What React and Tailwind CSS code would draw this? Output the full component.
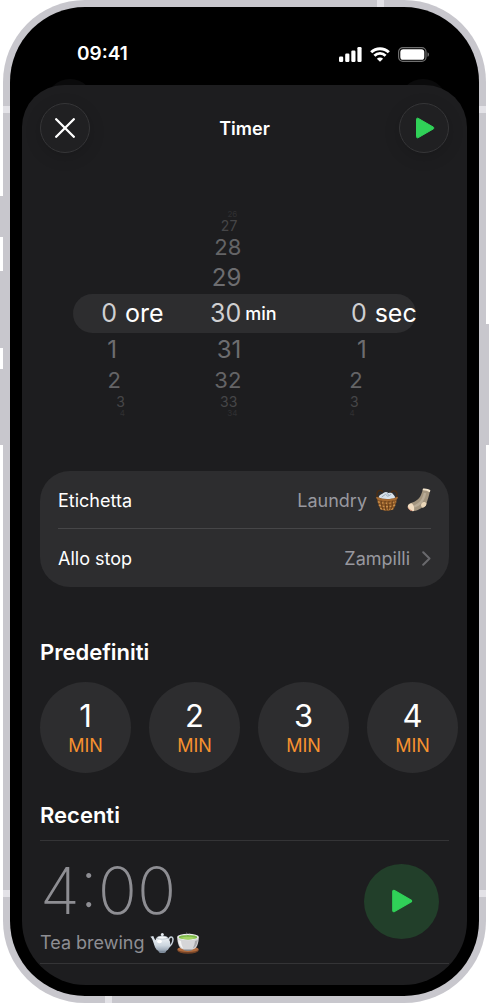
import { useState } from "react";

const STEPS = [
    { row: "h-2 leading-[8px] text-[8px] text-[#303032]" },
    { row: "h-[15px] leading-[15px] text-[14px] text-[#464648]" },
    { row: "h-7 leading-7 text-[22px] text-[#646466]" },
    { row: "h-[33px] leading-[33px] text-[24px] text-[#6d6d70]" },
    { row: "h-[39px] leading-[39px] text-[25px] text-[#cfcfd1]" },
    { row: "h-[33px] leading-[33px] text-[24px] text-[#6d6d70]" },
    { row: "h-7 leading-7 text-[22px] text-[#646466]" },
    { row: "h-[15px] leading-[15px] text-[14px] text-[#464648]" },
    { row: "h-2 leading-[8px] text-[8px] text-[#303032]" },
];

// The outer wheels lean towards the middle one
const WHEELS = [
    {
        name: "ore",
        values: ["", "", "", "", "0", "1", "2", "3", "4"],
        lean: ["pr-0", "pr-1", "pr-2", "pr-2", "pr-2", "pr-2", "pr-1", "pr-0", "pr-0"],
        unit: "-ml-2 pl-2 text-[25px]",
        box: "w-[52px]",
    },
    {
        name: "min",
        values: ["26", "27", "28", "29", "30", "31", "32", "33", "34"],
        lean: ["pr-1", "pr-1", "pr-0", "pr-0", "pr-0", "pr-0", "pr-0", "pr-1", "pr-1"],
        unit: "pl-1 text-[18px] font-medium",
        box: "w-[43px]",
    },
    {
        name: "sec",
        values: ["", "", "", "", "0", "1", "2", "3", "4"],
        lean: ["pr-3", "pr-2", "pr-1", "pr-0", "pr-0", "pr-0", "pr-1", "pr-2", "pr-3"],
        unit: "pl-2 text-[25px]",
        box: "w-[43px]",
    },
];

const PRESETS = [1, 2, 3, 4];

const PlayIcon = ({ className }) => (
    <svg viewBox="0 0 20 22" className={className} aria-hidden="true">
        <path
            d="M1.500 2.200v17.600c0 .9.8 1.300 1.600.9L18.200 12c.9-.5.9-1.500 0-2L3.100 1.300C2.300.900 1.500 1.300 1.500 2.200z"
            fill="#30d158"
            stroke="#30d158"
            strokeWidth="1"
            strokeLinejoin="round"
        />
    </svg>
);

const StatusIcons = () => (
    <div className="flex items-center gap-2">
        <svg viewBox="0 0 23 15" className="h-[15px] w-[23px]" fill="#fff" aria-hidden="true">
            <rect x="0" y="9.500" width="4.200" height="5.500" rx="1.200" />
            <rect x="6.200" y="6.500" width="4.200" height="8.500" rx="1.200" />
            <rect x="12.300" y="3.500" width="4.200" height="11.500" rx="1.200" />
            <rect x="18.400" y="0" width="4.200" height="15" rx="1.200" />
        </svg>
        <svg viewBox="0 0 20 15" className="h-[15px] w-[20px]" fill="none" stroke="#fff" aria-hidden="true">
            <path d="M1.200 5.300a12.600 12.600 0 0 1 17.600 0" strokeWidth="3" />
            <path d="M4.400 8.800a7.900 7.900 0 0 1 11.200 0" strokeWidth="2.800" />
            <path d="M10 14.700l-3.100-3a4.400 4.400 0 0 1 6.200 0z" fill="#fff" stroke="none" />
        </svg>
        <svg viewBox="0 0 32 15" className="h-[15px] w-[32px]" aria-hidden="true">
            <rect x=".6" y=".6" width="27.400" height="13.800" rx="4.300" fill="none" stroke="#6f6f6f" strokeWidth="1.200" />
            <rect x="2.300" y="2.200" width="24" height="10.600" rx="2.900" fill="#fff" />
            <path d="M29.500 5.200c1 .4 1.500 1.300 1.500 2.300s-.5 1.900-1.500 2.300z" fill="#6f6f6f" />
        </svg>
    </div>
);

const BasketIcon = () => (
    <svg viewBox="0 0 24 24" className="h-6 w-6" role="img" aria-label="Cesto">
        <path d="M3 10.500C1.200 6.500 1.500 2.700 5 2.300c1.200-.1 2 .4 2.600 1.200M21 11c1.800-4 1.500-7.800-2-8.200-1.200-.1-2.200.4-2.700 1.500" fill="none" stroke="#4b2d13" strokeWidth="1.300" strokeLinecap="round" />
        <path d="M2 9.800c2-1.500 18-1.500 20 0-.3 3.500-1.500 7-2.700 10-.8 2-3.400 3-7.300 3s-6.500-1-7.300-3c-1.200-3-2.400-6.500-2.700-10z" fill="#8c5725" />
        <path d="M2.800 13.600c5.300 2.300 13.100 2.300 18.400 0M3.900 17c4.800 2.200 11.400 2.200 16.200 0M5.200 20.200c4 1.800 9.600 1.800 13.600 0" fill="none" stroke="#c98f4b" strokeWidth="1.500" strokeDasharray="2.300 1.300" />
        <path d="M6 12l1.500 9M10 12.500l.6 9.500M14 12.500l-.6 9.500M18 12l-1.500 9" stroke="#533014" strokeWidth=".7" />
        <path d="M2 9.800c2 3 18 3 20 0" fill="none" stroke="#a86c32" strokeWidth="1.800" strokeLinecap="round" />
        <path d="M3.500 9.300C4.500 6.500 7 6.300 8.800 4.800c1.600-1.300 3.200-.9 4.600.2 1.800-.6 3.700-.4 4.700 1.200.9.900 1.700 2 2.200 3.200-4 2-12.500 2-16.800-.1z" fill="#d9e2ea" />
        <path d="M7 8.800l3.500-2.500 2.300 2 3.200-1.900M12.200 5.400l1.500 1.700" fill="none" stroke="#93a4b3" strokeWidth=".9" strokeLinecap="round" />
    </svg>
);

const SockIcon = () => (
    <svg viewBox="0 0 24 24" className="h-6 w-6" role="img" aria-label="Calzino">
        <path d="M15.800 1.500c2.300-.6 4.800.2 7 1.700-.5 4.500-2.300 8.500-3.600 13.300-.5 2-2.100 2.500-3.600 3.100-3 1-5.400 3.400-9 3.400-3.600.1-6.400-2.800-5.500-5.700 1-2.500 5.900-2.600 8.500-5 4.100-2.800 5.200-7.100 6.200-10.800z" fill="#a3957f" />
        <path d="M18 5c-.8 4-2.500 8-5.500 10.500-2 1.600-4 2.300-5.500 3.300" fill="none" stroke="#b9ac97" strokeWidth="2.400" />
        <path d="M15.600 2.300l.4-1.800c2.700-.4 5.400.3 7.400 1.800l-.6 2c-2.200-1.400-4.500-2.100-7.200-2z" fill="#f1e3cb" />
        <path d="M4.500 15.300c-2.800.7-4.200 2.300-3.600 4.400.8 2.300 3.400 3.700 6 3.400.8-3.700-.1-6-2.400-7.800z" fill="#f1dcc0" />
        <path d="M19.500 15.700c-.6-1.700-2.800-2.400-4.400-1-1.600 1.500-1.500 3.900.5 5 1.700-.6 3.400-1.300 3.900-4z" fill="#ead6b9" />
        <path d="M1.200 19.500c.5 1.800 2.300 3 4 3.200" fill="none" stroke="#c36b54" strokeWidth=".7" />
    </svg>
);

const TeapotIcon = () => (
    <svg viewBox="0 0 24 22" className="h-[22px] w-6" role="img" aria-label="Teiera">
        <defs>
            <linearGradient id="pot" x1="0" y1="0" x2="0" y2="1">
                <stop offset="0" stopColor="#f8fafc" />
                <stop offset=".6" stopColor="#cbd5de" />
                <stop offset="1" stopColor="#8d9aaa" />
            </linearGradient>
        </defs>
        <path d="M18.500 8c1-3.700 4.600-3.900 4.500-.4-.1 3.200-2.300 6.900-5.200 7.400" fill="none" stroke="#c4ced7" strokeWidth="1.500" />
        <path d="M.3 4.800l3-.8c1 2.700 1.700 4.300 3.500 5.300l-.4 6C2.900 13 3.600 7.300.3 4.800z" fill="#d6dee6" />
        <ellipse cx="12.300" cy="12" rx="8" ry="8" fill="url(#pot)" />
        <path d="M8.300 18.800h8l-.8 1.700c-2 .8-4.500.8-6.400 0z" fill="#7f8c9b" />
        <path d="M6.500 6.300c.7-3 10.800-3 11.600 0-3.300 1.100-8.300 1.100-11.600 0z" fill="#f7f9fb" stroke="#9eabb7" strokeWidth=".6" />
        <circle cx="12.300" cy="2.400" r="1.500" fill="#e4eaf0" />
        <ellipse cx="9.500" cy="9.500" rx="2.400" ry="1.800" fill="#fff" />
    </svg>
);

const TeacupIcon = () => (
    <svg viewBox="0 0 24 22" className="h-[22px] w-6" role="img" aria-label="Tazza di tè">
        <ellipse cx="12" cy="18.300" rx="10.800" ry="3.400" fill="#744326" />
        <ellipse cx="12" cy="17.300" rx="10.700" ry="2.800" fill="#b16b3d" />
        <path d="M7.700 15h8.600v3.200c-2 1.100-6.600 1.100-8.600 0z" fill="#85868a" />
        <path d="M1.200 5.300c.2 5.900 1.800 11.700 6.500 12.200h8.600c4.700-.5 6.300-6.300 6.500-12.200z" fill="#d5d5d7" />
        <path d="M2.200 8c.5 4 2 7 5 8.600-1.300-3-2-5-2.200-7.600z" fill="#f3f3f3" />
        <path d="M21.800 8c-.5 4-2 7-5 8.600 1.300-3 2-5 2.200-7.600z" fill="#a7a7aa" />
        <ellipse cx="12" cy="5" rx="10.900" ry="3.200" fill="#ededee" />
        <ellipse cx="12" cy="5.200" rx="9.300" ry="2.300" fill="#7dba49" />
        <path d="M4.300 6c3.900-1.700 11.500-1.700 15.400 0-4 1.900-11.400 1.900-15.400 0z" fill="#a3d464" />
        <path d="M10.500 4.300c-1.500-1.600 1-2 0-3.800M13.500 4c-1.100-1.300.9-1.500.2-3" fill="none" stroke="#b9c0b7" strokeWidth=".7" opacity=".6" />
    </svg>
);

const Wheel = ({ wheel }) => (
    <div
        className="flex items-center"
        role="spinbutton"
        aria-label={wheel.name}
        aria-valuenow={Number(wheel.values[4])}
        tabIndex={0}>
        <div className={`shrink-0 ${wheel.box}`}>
            {STEPS.map((step, i) => (
                <div key={i} className={`text-right ${step.row} ${wheel.lean[i]}`}>
                    {wheel.values[i]}
                </div>
            ))}
        </div>
        <span className={`text-white ${wheel.unit}`}>{wheel.name}</span>
    </div>
);

const PhoneFrame = ({ children }) => (
    <div className="relative mx-[3px] rounded-[82px] bg-[#c8c7cd] p-[7px]">
        {/* Side buttons */}
        <div className="absolute -left-[3px] top-[196px] h-[41px] w-[3px] bg-[#c8c7cd]" />
        <div className="absolute -left-[3px] top-[271px] h-[77px] w-[3px] bg-[#c8c7cd]" />
        <div className="absolute -left-[3px] top-[369px] h-[76px] w-[3px] bg-[#c8c7cd]" />
        <div className="absolute -right-[3px] top-[324px] h-[121px] w-[3px] bg-[#c8c7cd]" />
        {/* Antenna bands */}
        <div className="absolute left-0 right-0 top-[106px] h-[7px] bg-[#e3e2e7]" />
        <div className="absolute bottom-[106px] left-0 right-0 h-[7px] bg-[#e3e2e7]" />
        <div className="absolute right-[102px] top-0 h-[7px] w-[7px] bg-[#e3e2e7]" />
        <div className="absolute bottom-0 left-[102px] h-[7px] w-[7px] bg-[#e3e2e7]" />
        <div className="relative rounded-[75px] bg-black px-3 pb-[11px]">{children}</div>
    </div>
);

const App = () => {
    const [label, setLabel] = useState("Laundry");

    return (
        <main className="min-h-screen bg-white font-['Inter','Liberation_Sans',sans-serif] text-white">
            <PhoneFrame>
                <header className="relative flex h-[78px] items-center justify-between pl-[55px] pr-[37px] pt-4">
                    <span className="text-[19px] font-semibold leading-6">09:41</span>
                    <StatusIcons />
                    <div className="absolute left-6 top-[72px] h-12 w-12 rounded-full bg-[#0a0a0b]" />
                    <div className="absolute right-5 top-[72px] h-12 w-12 rounded-full bg-[#0a0a0b]" />
                </header>

                <section className="relative overflow-hidden rounded-b-[64px] rounded-t-[42px] bg-[#1d1d1f] px-[18px] pb-[21px] pt-[18px]">
                    <div className="flex items-center justify-between">
                        <button
                            type="button"
                            aria-label="Chiudi"
                            className="flex size-[50px] items-center justify-center rounded-full border border-[#363638] bg-[#202022] shadow-[0_4px_16px_rgba(0,0,0,0.15)]">
                            <svg viewBox="0 0 20 20" className="size-5" aria-hidden="true">
                                <path d="M1.200 1.200l17.600 17.600M18.800 1.200L1.200 18.800" stroke="#fff" strokeWidth="2.300" strokeLinecap="round" />
                            </svg>
                        </button>
                        <h1 className="pt-[2px] text-[18px] font-semibold leading-6">Timer</h1>
                        <button
                            type="button"
                            aria-label="Avvia"
                            className="flex size-[50px] items-center justify-center rounded-full border border-[#363638] bg-[#202022] pl-px shadow-[0_4px_16px_rgba(0,0,0,0.15)]">
                            <PlayIcon className="h-[22px] w-5" />
                        </button>
                    </div>

                    <div className="relative mt-[57px] pl-[33px]">
                        <div className="absolute left-[33px] right-[33px] top-[84px] h-[39px] rounded-full bg-[#2d2d2f]" />
                        <div className="relative grid grid-cols-3">
                            {WHEELS.map((wheel) => (
                                <Wheel key={wheel.name} wheel={wheel} />
                            ))}
                        </div>
                    </div>

                    <div className="mt-[54px] rounded-[30px] bg-[#2d2d2f] px-[18px] text-[18px]">
                        <div className="flex h-[58px] items-center border-b border-[#464648] pt-px">
                            <label htmlFor="label">Etichetta</label>
                            <input
                                id="label"
                                type="text"
                                value={label}
                                onChange={(e) => setLabel(e.target.value)}
                                className="min-w-0 flex-1 bg-transparent text-right text-[#98989f] outline-none"
                            />
                            <div className="flex gap-2 pl-2">
                                <BasketIcon />
                                <SockIcon />
                            </div>
                        </div>
                        <button type="button" className="flex h-[58px] w-full items-center justify-between pt-px">
                            <span>Allo stop</span>
                            <span className="flex items-center gap-3 text-[#98989f]">
                                Zampilli
                                <svg viewBox="0 0 9 15" className="h-[15px] w-[9px]" fill="none" aria-hidden="true">
                                    <path d="M1.200 1.200l6.300 6.300-6.300 6.300" stroke="#69696d" strokeWidth="2" strokeLinecap="round" strokeLinejoin="round" />
                                </svg>
                            </span>
                        </button>
                    </div>

                    <h2 className="mt-[51px] text-[22px] font-semibold leading-7">Predefiniti</h2>
                    <div className="-mr-[18px] mt-4 flex gap-[18px] overflow-hidden">
                        {PRESETS.map((preset) => (
                            <button
                                key={preset}
                                type="button"
                                className="flex size-[91px] shrink-0 flex-col items-center justify-center rounded-full bg-[#2d2d2f] pt-1">
                                <span className="text-[31px] leading-8">{preset}</span>
                                <span className="text-[18px] leading-7 text-[#f6912f]">MIN</span>
                            </button>
                        ))}
                    </div>

                    <h2 className="mt-7 text-[22px] font-semibold leading-7">Recenti</h2>
                    <div className="mt-[11px] flex h-[124px] items-center justify-between border-y border-[#343436] pb-[2px] pr-[10px] text-[#8e8e93]">
                        <div className="pt-2">
                            <p className="text-[65px] font-extralight leading-[76px]">4:00</p>
                            <p className="flex items-center text-[18px] leading-7">
                                Tea brewing
                                <span className="flex gap-[2px] pl-[6px]">
                                    <TeapotIcon />
                                    <TeacupIcon />
                                </span>
                            </p>
                        </div>
                        <button
                            type="button"
                            aria-label="Avvia Tea brewing"
                            className="flex size-[75px] items-center justify-center rounded-full bg-[#223f2a] pl-px">
                            <PlayIcon className="h-[24px] w-[22px]" />
                        </button>
                    </div>
                </section>
            </PhoneFrame>
        </main>
    );
};

export default App;
